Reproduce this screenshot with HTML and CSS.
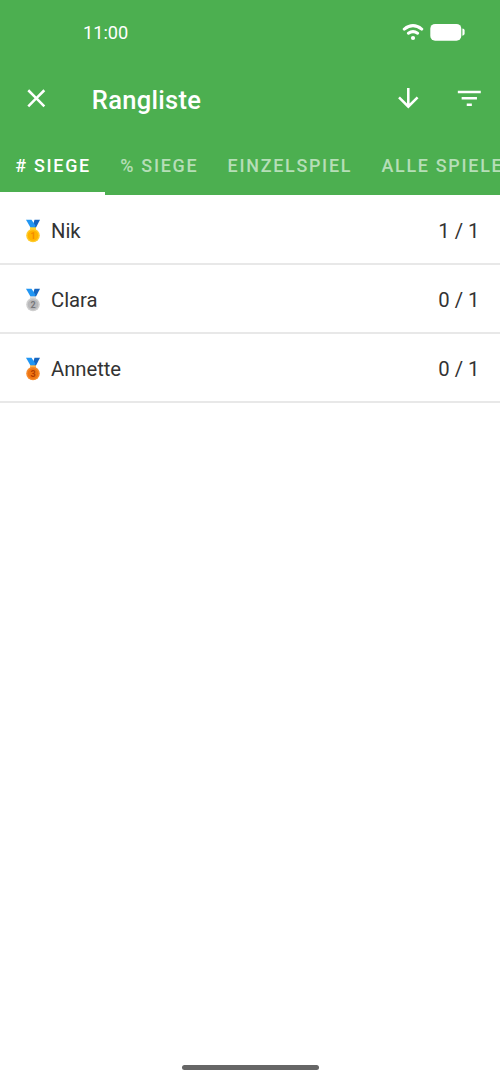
FILE: index.html
```html
<!DOCTYPE html>
<html lang="de">
<head>
<meta charset="utf-8">
<title>Rangliste</title>
<link rel="stylesheet" href="styles.css">
</head>
<body>
<div class="screen">
  <header class="header">
    <div class="status">
      <span class="clock">11:00</span>
      <span class="indicators">
        <svg class="wifi" viewBox="0 0 22 18" fill="none" stroke="#fff" stroke-width="3.1" stroke-linecap="round"><path d="M2.3 6.1Q11 -.7 19.7 6.1"/><path d="M6.4 10.2Q11 7 15.6 10.2"/><circle cx="11" cy="15" r="2.1" fill="#fff" stroke="none"/></svg>
        <svg class="battery" viewBox="0 0 35 18" fill="#fff"><rect x="0.3" y="0.9" width="31" height="16.8" rx="4.8"/><path d="M32.4 5.6Q34.6 5.6 34.6 7.6V10.6Q34.6 12.7 32.4 12.7Z"/></svg>
      </span>
    </div>
    <div class="toolbar">
      <svg class="icon" viewBox="0 0 24 24"><path d="M19 6.41 17.59 5 12 10.59 6.41 5 5 6.41 10.59 12 5 17.59 6.41 19 12 13.41 17.59 19 19 17.59 13.41 12z"/></svg>
      <h1 class="title">Rangliste</h1>
      <div class="actions">
        <svg class="icon" viewBox="0 0 24 24"><path d="m20 12-1.41-1.41L13 16.17V4h-2v12.17l-5.58-5.59L4 12l8 8z"/></svg>
        <svg class="icon" viewBox="0 0 24 24"><path d="M10 18h4v-2h-4zM3 6v2h18V6zm3 7h12v-2H6z"/></svg>
      </div>
    </div>
    <nav class="tabs">
      <span class="tab active"># SIEGE</span>
      <span class="tab">% SIEGE</span>
      <span class="tab">EINZELSPIEL</span>
      <span class="tab">ALLE SPIELE</span>
    </nav>
  </header>
  <main class="list">
    <div class="row">
      <svg class="medal" viewBox="0 0 16 24"><path fill="#1565c0" d="M9.5 .8H15L10.5 9.5H7z"/><path fill="#2196f3" d="M1 .8h5.5l4 6-1.5 2.7H6z"/><path fill="#fdd835" d="M5 8.3h6v3H5z"/><circle cx="8" cy="16.5" r="6.8" fill="#ffca28"/><circle cx="8" cy="16.5" r="5.3" fill="#ffb300"/><text class="place gold" x="8" y="19.7">1</text></svg>
      <span class="name">Nik</span><span class="score">1 / 1</span>
    </div>
    <div class="row">
      <svg class="medal" viewBox="0 0 16 24"><path fill="#1565c0" d="M9.5 .8H15L10.5 9.5H7z"/><path fill="#2196f3" d="M1 .8h5.5l4 6-1.5 2.7H6z"/><path fill="#e0e0e0" d="M5 8.3h6v3H5z"/><circle cx="8" cy="16.5" r="6.8" fill="#cecece"/><circle cx="8" cy="16.5" r="5.3" fill="#b8b8ba"/><text class="place silver" x="8" y="19.7">2</text></svg>
      <span class="name">Clara</span><span class="score">0 / 1</span>
    </div>
    <div class="row">
      <svg class="medal" viewBox="0 0 16 24"><path fill="#1565c0" d="M9.5 .8H15L10.5 9.5H7z"/><path fill="#2196f3" d="M1 .8h5.5l4 6-1.5 2.7H6z"/><path fill="#ffb74d" d="M5 8.3h6v3H5z"/><circle cx="8" cy="16.5" r="6.8" fill="#f58a2c"/><circle cx="8" cy="16.5" r="5.3" fill="#ee7412"/><text class="place bronze" x="8" y="19.7">3</text></svg>
      <span class="name">Annette</span><span class="score">0 / 1</span>
    </div>
  </main>
  <div class="home-bar"></div>
</div>
</body>
</html>
```

FILE: styles.css
```css
* { box-sizing: border-box; }
body { margin: 0; font-family: Roboto, sans-serif; background: #fff; }
.screen { width: 500px; height: 1083px; display: flex; flex-direction: column; overflow: hidden; }
.header { height: 195.3px; flex: none; background: #4caf50; color: #fff; display: flex; flex-direction: column; }
.status { height: 64px; padding: 0 35px 0 83px; display: flex; align-items: center; justify-content: space-between; }
.clock { font-size: 18.2px; }
.indicators { display: flex; gap: 6px; }
.wifi { width: 22px; height: 18px; }
.battery { width: 35px; height: 18px; }
.toolbar { height: 69px; padding: 0 15.5px 0 20.5px; display: flex; align-items: center; }
.icon { width: 30.6px; height: 30.6px; fill: #fff; display: block; flex: none; }
.title { margin: 3px 0 0 40.7px; font-size: 25.5px; font-weight: 500; letter-spacing: 0.3px; line-height: 32px; }
.actions { margin-left: auto; display: flex; gap: 30.5px; }
.tabs { height: 62.3px; display: flex; }
.tab { flex: none; padding: 0 14px 0 15.3px; line-height: 65px; font-size: 17.9px; font-weight: 500; letter-spacing: 1.73px; color: rgba(255,255,255,.6); white-space: nowrap; }
.tab.active { color: #fff; border-bottom: 3px solid #fff; }
.list { flex: 1; padding-top: 1px; }
.row { height: 69px; padding: 2px 20.5px 0 25px; display: flex; align-items: center; border-bottom: 2px solid #e8e8e8; font-size: 20.3px; color: #333; }
.medal { width: 16px; height: 24px; display: block; }
.place { font: 700 9px Roboto, sans-serif; text-anchor: middle; }
.gold { fill: #f28b00; }
.silver { fill: #77777a; }
.bronze { fill: #b33c00; }
.name { margin-left: 10px; letter-spacing: -0.05px; }
.score { margin-left: auto; }
.home-bar { width: 137px; height: 5px; margin: 0 auto 13px; border-radius: 2.5px; background: #666; flex: none; }
```
